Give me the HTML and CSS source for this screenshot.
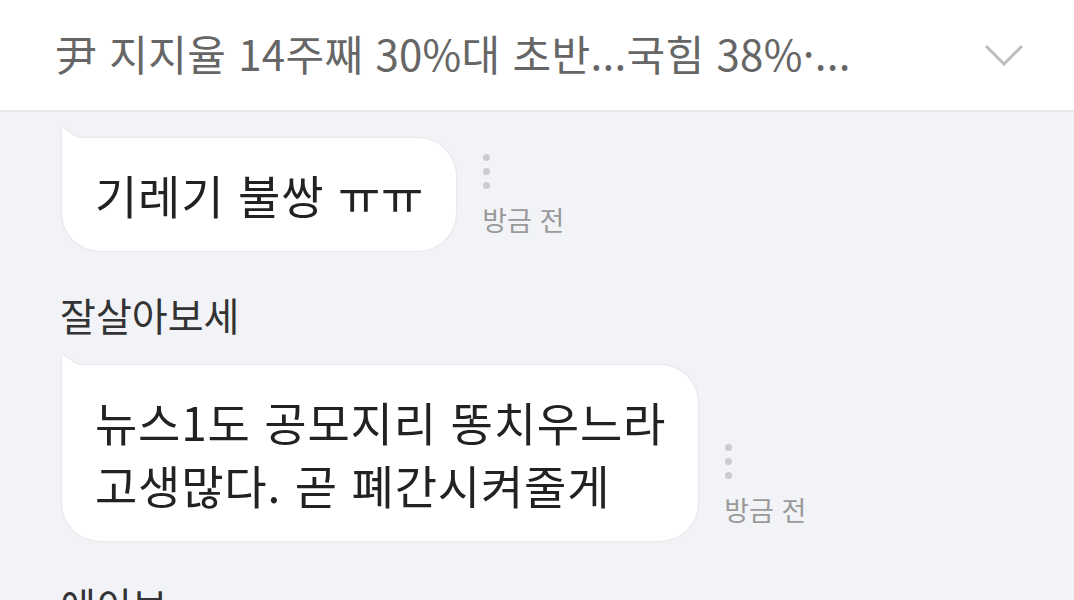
FILE: index.html
```html
<!DOCTYPE html>
<html lang="ko">
<head>
    <meta charset="UTF-8">
    <title>댓글</title>
    <link rel="stylesheet" href="styles.css">
</head>
<body>
    <div class="header">
        <div class="title">尹 지지율 14주째 30%대 초반...국힘 38%·...</div>
        <svg class="chevron" width="40" height="24" viewBox="0 0 40 24">
            <polyline points="2,2 20,20 38,2" fill="none" stroke="#bdbdbd" stroke-width="3"/>
        </svg>
    </div>

    <div class="chat">
        <div class="msg first">
            <div class="row">
                <div class="bubble">기레기 불쌍 ㅠㅠ</div>
                <div class="meta">
                    <div class="dots"><span></span><span></span><span></span></div>
                    <div class="time">방금 전</div>
                </div>
            </div>
        </div>

        <div class="msg">
            <div class="name">잘살아보세</div>
            <div class="row">
                <div class="bubble">뉴스1도 공모지리 똥치우느라<br>고생많다. 곧 폐간시켜줄게</div>
                <div class="meta">
                    <div class="dots"><span></span><span></span><span></span></div>
                    <div class="time">방금 전</div>
                </div>
            </div>
        </div>

        <div class="msg">
            <div class="name">에이브</div>
        </div>
    </div>
</body>
</html>
```

FILE: styles.css
```css
body {
    margin: 0;
    background-color: #f2f3f7;
    font-family: "Noto Sans CJK KR", "Noto Sans", sans-serif;
    overflow: hidden;
}
.header {
    height: 110px;
    background: #fff;
    border-bottom: 2px solid #e6e7ea;
    display: flex;
    align-items: center;
    justify-content: space-between;
    padding: 0 50px 0 55px;
}
.title {
    font-size: 42px;
    letter-spacing: 0.3px;
    color: #666;
    white-space: nowrap;
    margin-top: -6px;
}
.chevron {
    margin-top: 2px;
}
.chat {
    padding: 26px 0 0 62px;
}
.msg {
    margin-bottom: 38px;
}
.name {
    font-size: 39px;
    line-height: 50px;
    color: #333;
    margin: 0 0 26px -2px;
}
.row {
    display: flex;
    align-items: flex-end;
}
.bubble {
    position: relative;
    background: #fff;
    font-size: 46px;
    letter-spacing: 0.8px;
    line-height: 63px;
    color: #222;
    padding: 25px 32px 25px 33px;
    border-radius: 0 38px 38px 38px;
    filter: drop-shadow(0 0 1px rgba(0, 0, 0, 0.12));
}
.bubble::before {
    content: "";
    position: absolute;
    left: 0;
    top: -10px;
    width: 20px;
    height: 11px;
    background: #fff;
    clip-path: polygon(0 0, 30% 30%, 60% 70%, 100% 100%, 0 100%);
}
.meta {
    display: flex;
    flex-direction: column;
    margin: 0 0 16px 26px;
}
.dots {
    display: flex;
    flex-direction: column;
    gap: 7px;
    margin: 0 0 16px 1px;
}
.dots span {
    width: 7px;
    height: 7px;
    border-radius: 50%;
    background: #cccccf;
}
.time {
    font-size: 27px;
    line-height: 30px;
    color: #999;
}
```
